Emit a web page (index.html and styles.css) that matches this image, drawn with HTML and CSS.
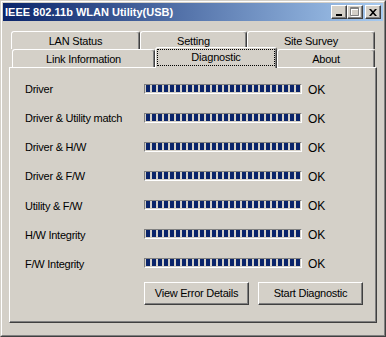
FILE: index.html
```html
<!DOCTYPE html>
<html lang="en">
<head>
    <meta charset="UTF-8">
    <title>IEEE 802.11b WLAN Utility(USB)</title>
    <link rel="stylesheet" href="styles.css">
</head>
<body>
    <div class="window">
        <div class="window-inner">
            <div class="titlebar">
                <span class="title">IEEE 802.11b WLAN Utility(USB)</span>
                <div class="title-btns">
                    <button class="cap-btn">
                        <svg width="8" height="7" viewBox="0 0 8 7"><rect x="1" y="5" width="6" height="2" fill="#000"/></svg>
                    </button>
                    <button class="cap-btn" disabled>
                        <svg width="10" height="10" viewBox="0 0 10 10">
                            <path d="M1.5 1.5h8v8h-8z M1 2.5h9" fill="none" stroke="#fff"/>
                            <path d="M0.5 0.5h8v8h-8z M0 1.5h9" fill="none" stroke="#808080"/>
                        </svg>
                    </button>
                    <button class="cap-btn close-btn">
                        <svg width="8" height="7" viewBox="0 0 8 7"><path d="M0 0h2l2 2.2 2-2.2h2l-3 3.5 3 3.5h-2l-2-2.2-2 2.2h-2l3-3.5z" fill="#000"/></svg>
                    </button>
                </div>
            </div>

            <div class="client">
                <div class="tab-row back">
                    <div class="tab" style="width:129px">LAN Status</div>
                    <div class="tab" style="width:107px">Setting</div>
                    <div class="tab" style="width:128px">Site Survey</div>
                </div>
                <div class="tab-row front">
                    <div class="tab" style="width:143px">Link Information</div>
                    <div class="tab selected" style="width:122px"><span class="focus">Diagnostic</span></div>
                    <div class="tab" style="width:98px">About</div>
                </div>

                <div class="page">
                    <div class="diag-list">
                        <div class="label">Driver</div>
                        <div class="bar"><div class="fill"></div></div>
                        <div class="result">OK</div>

                        <div class="label">Driver &amp; Utility match</div>
                        <div class="bar"><div class="fill"></div></div>
                        <div class="result">OK</div>

                        <div class="label">Driver &amp; H/W</div>
                        <div class="bar"><div class="fill"></div></div>
                        <div class="result">OK</div>

                        <div class="label">Driver &amp; F/W</div>
                        <div class="bar"><div class="fill"></div></div>
                        <div class="result">OK</div>

                        <div class="label">Utility &amp; F/W</div>
                        <div class="bar"><div class="fill"></div></div>
                        <div class="result">OK</div>

                        <div class="label">H/W Integrity</div>
                        <div class="bar"><div class="fill"></div></div>
                        <div class="result">OK</div>

                        <div class="label">F/W Integrity</div>
                        <div class="bar"><div class="fill"></div></div>
                        <div class="result">OK</div>
                    </div>
                    <div class="actions">
                        <button class="push-btn">View Error Details</button>
                        <button class="push-btn">Start Diagnostic</button>
                    </div>
                </div>
            </div>
        </div>
    </div>
</body>
</html>
```

FILE: styles.css
```css
body {
    margin: 0;
    background-color: #d4d0c8;
    font-family: "Liberation Sans", Arial, sans-serif;
    font-size: 11px;
    color: #000;
}
.window {
    box-sizing: border-box;
    width: 386px;
    height: 337px;
    background-color: #d4d0c8;
    border: 1px solid;
    border-color: #d4d0c8 #404040 #404040 #d4d0c8;
}
.window-inner {
    box-sizing: border-box;
    height: 100%;
    padding: 1px;
    border: 1px solid;
    border-color: #fff #808080 #808080 #fff;
}
.titlebar {
    height: 18px;
    display: flex;
    align-items: center;
    justify-content: space-between;
    background: linear-gradient(to right, #0a246a, #a6caf0);
    padding: 0 2px;
}
.title {
    color: #fff;
    font-weight: bold;
    font-size: 11px;
}
.title-btns {
    display: flex;
}
.cap-btn {
    box-sizing: border-box;
    width: 16px;
    height: 14px;
    padding: 0;
    margin: 0;
    display: flex;
    align-items: center;
    justify-content: center;
    background-color: #d4d0c8;
    border: 1px solid;
    border-color: #fff #404040 #404040 #fff;
    box-shadow: inset -1px -1px #808080;
}
.close-btn {
    margin-left: 2px;
}
.client {
    padding: 10px 6px 0 6px;
}
.tab-row {
    display: flex;
    height: 18px;
}
.tab-row.back {
    padding-left: 2px;
}
.tab-row.front {
    padding-left: 3px;
}
.tab {
    box-sizing: border-box;
    height: 18px;
    display: flex;
    align-items: center;
    justify-content: center;
    padding-top: 1px;
    letter-spacing: -0.2px;
    background-color: #d4d0c8;
    border: 1px solid;
    border-bottom: none;
    border-color: #fff #404040 transparent #fff;
    border-radius: 3px 3px 0 0;
    box-shadow: inset -1px 0 #808080;
}
.tab.selected {
    position: relative;
    z-index: 1;
    height: 21px;
    margin: -2px 0 -1px 0;
    padding: 1px 1px 2px 1px;
    align-items: stretch;
}
.focus {
    flex: 1;
    display: flex;
    align-items: center;
    justify-content: center;
    border: 1px dotted #000;
    padding-bottom: 2px;
}
.page {
    box-sizing: border-box;
    height: 256px;
    border: 1px solid;
    border-color: #fff #404040 #404040 #fff;
    box-shadow: inset -1px -1px #808080;
    padding: 6px 0 0 15px;
}
.diag-list {
    display: grid;
    grid-template-columns: 119px 158px auto;
    grid-auto-rows: 29.15px;
    align-items: center;
}
.label {
    letter-spacing: -0.25px;
    padding-top: 1px;
}
.bar {
    box-sizing: border-box;
    height: 10px;
    padding: 0 1px 1px 1px;
    border: 1px solid;
    border-color: #808080 #fff #fff #808080;
}
.fill {
    height: 7px;
    background: repeating-linear-gradient(to right, #0a246a 0 4px, transparent 4px 6px);
}
.result {
    padding-left: 6px;
    padding-top: 2px;
    font-size: 12px;
}
.actions {
    display: flex;
    gap: 9px;
    margin: 4px 0 0 119px;
}
.push-btn {
    box-sizing: border-box;
    width: 105px;
    height: 23px;
    padding: 0;
    font-family: "Liberation Sans", Arial, sans-serif;
    font-size: 11px;
    letter-spacing: -0.25px;
    color: #000;
    background-color: #d4d0c8;
    border: 1px solid;
    border-color: #fff #404040 #404040 #fff;
    box-shadow: inset -1px -1px #808080;
}
```
